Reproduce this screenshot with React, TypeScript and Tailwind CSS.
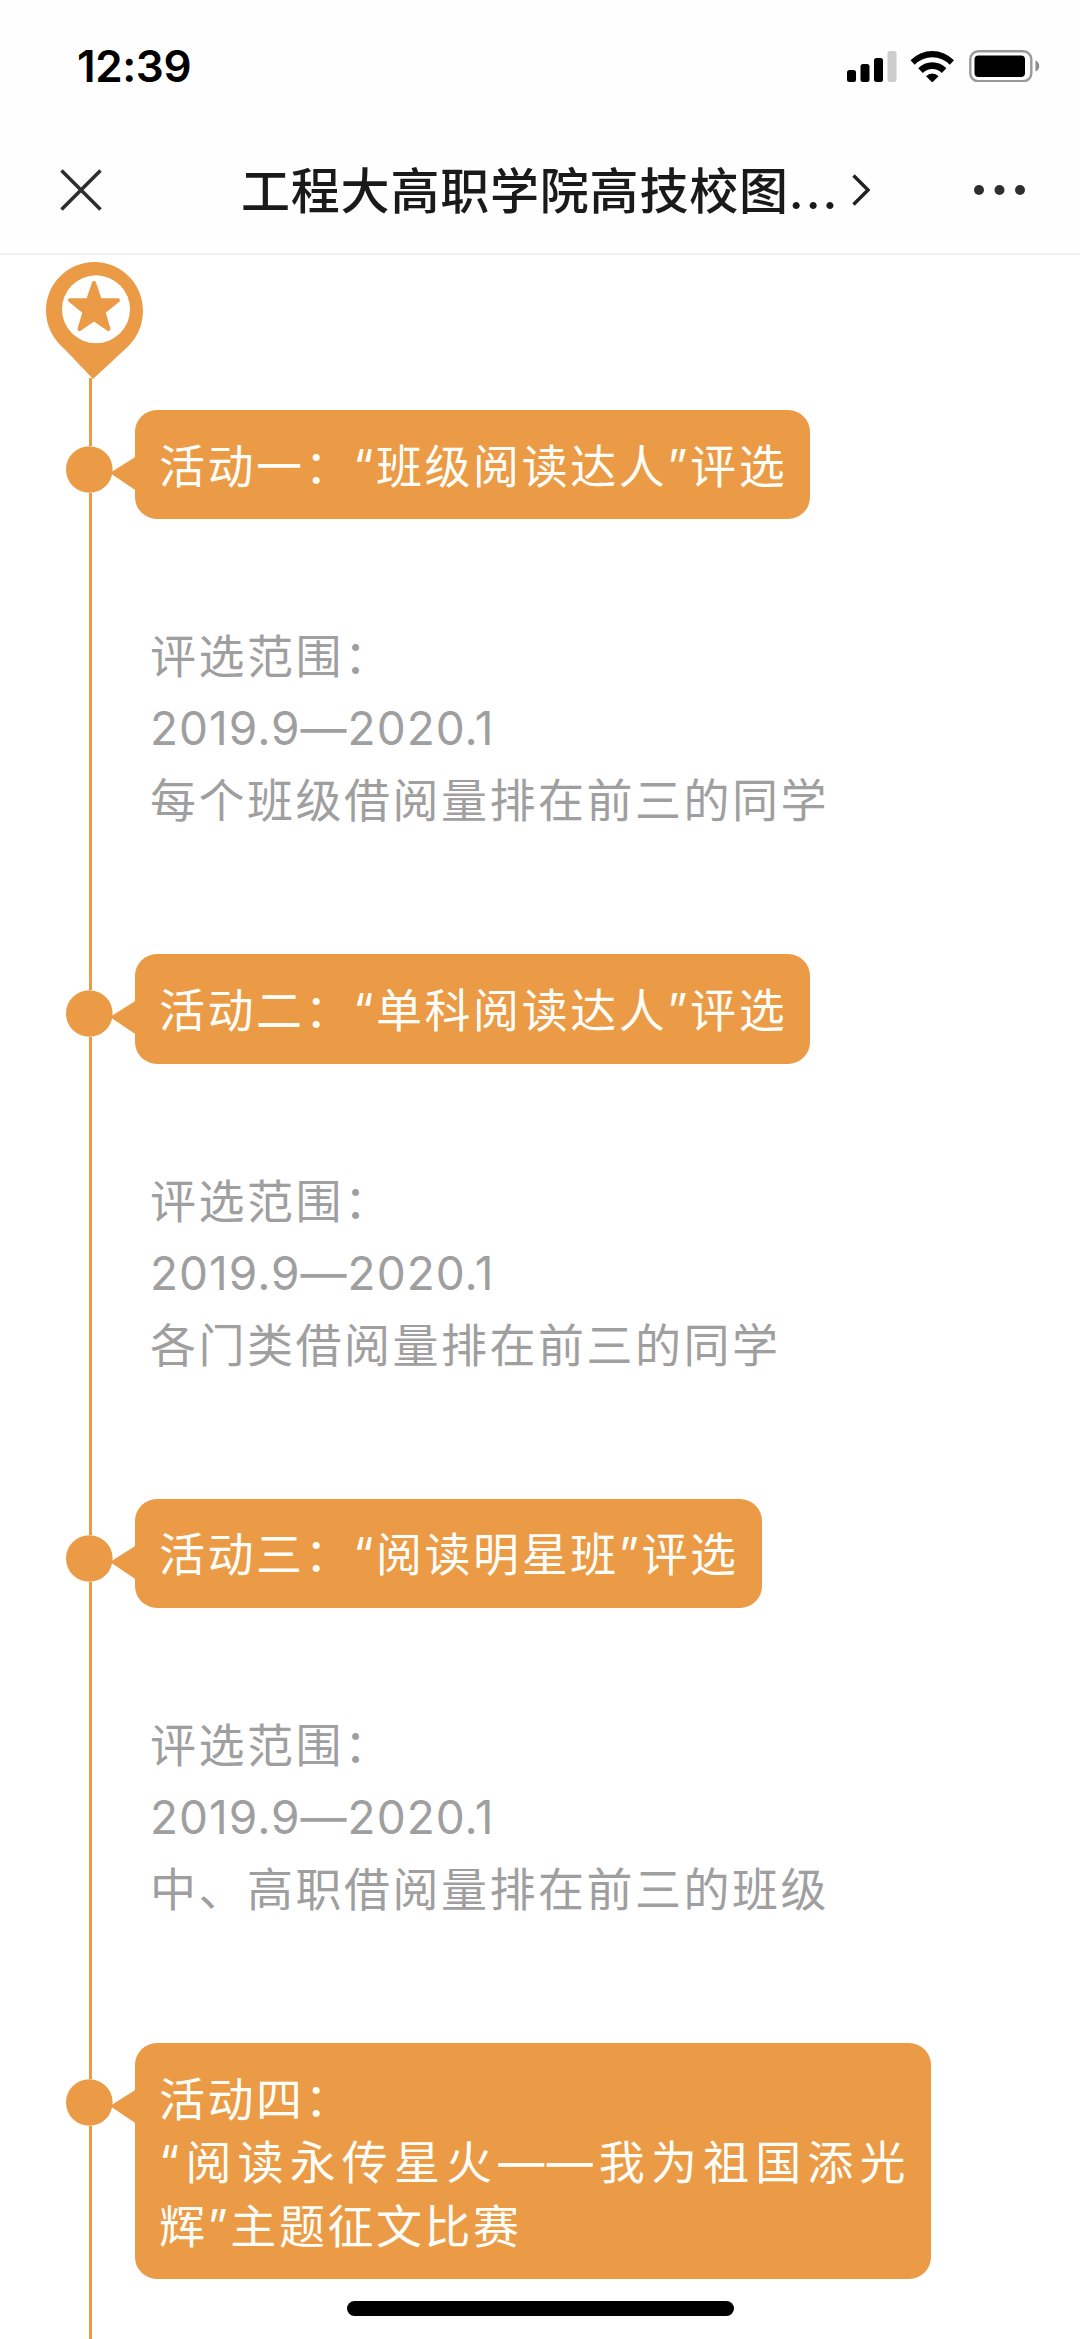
import React from "react";

const activities = [
  {
    id: 1,
    title: ["活动一：“班级阅读达人”评选"],
    period: "2019.9—2020.1",
    rule: "每个班级借阅量排在前三的同学",
  },
  {
    id: 2,
    title: ["活动二：“单科阅读达人”评选"],
    period: "2019.9—2020.1",
    rule: "各门类借阅量排在前三的同学",
  },
  {
    id: 3,
    title: ["活动三：“阅读明星班”评选"],
    period: "2019.9—2020.1",
    rule: "中、高职借阅量排在前三的班级",
  },
  {
    id: 4,
    title: ["活动四：", "“阅读永传星火——我为祖国添光辉”主题征文比赛"],
  },
];

type ActivityProps = {
  title: string[];
  period?: string;
  rule?: string;
};

const StatusBar = () => (
  <div className="flex h-[132px] items-center justify-between pl-[77px] pr-10">
    <span className="text-[44px] font-semibold leading-none tracking-[-0.4px] text-black">12:39</span>
    <svg className="h-8 w-[193px]" viewBox="0 0 193 32">
      {/* signal */}
      <rect x="0" y="20" width="9" height="12" rx="2.5" />
      <rect x="13.5" y="14" width="9" height="18" rx="2.5" />
      <rect x="27" y="8" width="9" height="24" rx="2.5" />
      <rect x="40.5" y="1" width="9" height="31" rx="2.5" fill="#cccccc" />
      {/* wifi */}
      <path d="M63.5 10.2a30.5 30.5 0 0 1 43.5 0l-4.2 4.5a24.5 24.5 0 0 0-35.1 0z" />
      <path d="M71.2 18.3a19.4 19.4 0 0 1 28.2 0l-4.6 4.6a13.6 13.6 0 0 0-19 0z" />
      <path d="M79 26.2a8.8 8.8 0 0 1 12.6 0l-6.3 6.2z" />
      {/* battery */}
      <rect x="123.3" y="1.2" width="61" height="30" rx="8" fill="none" stroke="#999999" strokeWidth="2.4" />
      <rect x="127.5" y="5.5" width="50.5" height="21.5" rx="4" />
      <path d="M188.5 10.5c5 1.5 5 9.5 0 11z" fill="#8c8c8c" />
    </svg>
  </div>
);

const NavBar = () => (
  <div className="flex h-[116px] items-center pl-[60px] pr-[55px]">
    <svg className="h-[42px] w-[42px]" viewBox="0 0 42 42" stroke="#2e2e2e" strokeWidth="3.6">
      <path d="M1.5 1.5l39 39M40.5 1.5l-39 39" />
    </svg>
    <div className="ml-[139px] flex flex-1 items-center">
      <h1 className="whitespace-nowrap pt-[3px] text-[49px] font-medium leading-[72px] tracking-[0.8px] text-[#1a1a1a]">
        工程大高职学院高技校图<span className="tracking-[2px]">...</span>
      </h1>
      <svg className="ml-[13px] h-8 w-[18px]" viewBox="0 0 18 32" fill="none" stroke="#222222" strokeWidth="3.4">
        <path d="M1.5 1.5L16 16 1.5 30.5" />
      </svg>
    </div>
    <svg className="h-[10px] w-[51px]" viewBox="0 0 51 10" fill="#2e2e2e">
      <circle cx="5" cy="5" r="5" />
      <circle cx="25.5" cy="5" r="5" />
      <circle cx="46" cy="5" r="5" />
    </svg>
  </div>
);

const Pin = () => (
  <svg className="ml-[46px] h-[117px] w-[97px]" viewBox="0 0 97 117">
    <path
      d="M48.5 0C75 0 97 21.5 97 48.5C97 63 91.5 75 82 84.5L47 117L19 87.5C7 77 0 64 0 48.5C0 21.5 22 0 48.5 0z"
      fill="#eb9a45"
    />
    <circle cx="50" cy="47.3" r="34" fill="#ffffff" />
    <path
      d="M48 21l6 17.3h18l-14.5 11.7 5 17L48 57 33.5 67l5-17L24 38.3h18z"
      fill="#eb9a45"
      stroke="#eb9a45"
      strokeWidth="4"
      strokeLinejoin="round"
    />
  </svg>
);

const Activity = ({ title, period, rule }: ActivityProps) => (
  <div className="flex">
    <div className="flex w-[135px] shrink-0 flex-col">
      <div className="ml-[89px] h-[36px] w-[3px] bg-[#eb9a45]" />
      <svg className="ml-[66px] h-[47px] w-[70px] shrink-0" viewBox="0 0 70 47" fill="#eb9a45">
        <circle cx="23.3" cy="23.5" r="23.3" />
        <path d="M44 27L70 10.5v34z" />
      </svg>
      <div className="ml-[89px] w-[3px] flex-1 bg-[#eb9a45]" />
    </div>
    <div className="flex flex-col items-start">
      <div className="max-w-[796px] rounded-[22px] bg-[#eb9a45] pb-[21.5px] pl-6 pr-[23px] pt-[24.5px] text-[46px] leading-[63.4px] tracking-[2.55px] text-[#fffdf8]">
        {title.map((line) => (
          <p key={line} className="text-justify">
            {line}
          </p>
        ))}
      </div>
      {rule && (
        <div className="mb-[118px] mt-[101px] pl-[15px] text-[46px] leading-[72px] tracking-[2.5px] text-[#9f9f9f]">
          <p>评选范围：</p>
          <p className="tracking-[1px]">{period}</p>
          <p>{rule}</p>
        </div>
      )}
    </div>
  </div>
);

const App = () => {
  return (
    <div
      lang="zh-CN"
      className="relative flex h-[2339px] w-[1080px] flex-col overflow-hidden bg-white font-[Inter,'Noto_Sans_CJK_SC',sans-serif]"
    >
      <header className="h-[255px] shrink-0 border-b-2 border-[#f2f2f2] bg-[#fefefe]">
        <StatusBar />
        <NavBar />
      </header>
      <main className="flex flex-1 flex-col pt-[7px]">
        <Pin />
        <div className="-mt-px ml-[89px] h-8 w-[3px] bg-[#eb9a45]" />
        {activities.map((activity) => (
          <Activity key={activity.id} title={activity.title} period={activity.period} rule={activity.rule} />
        ))}
        <div className="ml-[89px] w-[3px] flex-1 bg-[#eb9a45]" />
      </main>
      {/* home indicator */}
      <div className="absolute bottom-[23px] left-[347px] h-[15px] w-[387px] rounded-full bg-black" />
    </div>
  );
};

export default App;
